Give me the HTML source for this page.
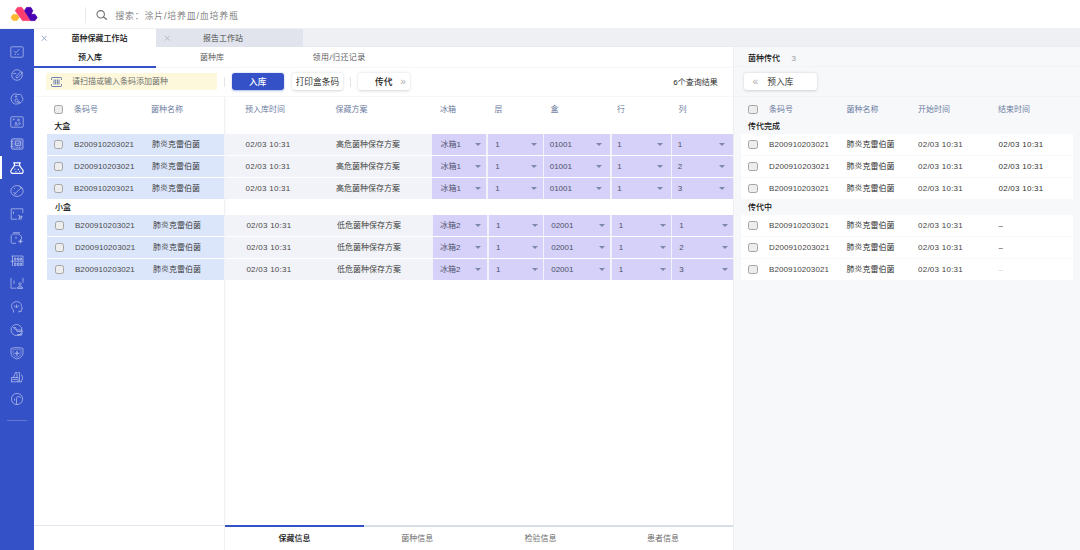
<!DOCTYPE html>
<html lang="zh-CN"><head><meta charset="utf-8"><title>菌种保藏工作站</title>
<style>
*{box-sizing:border-box;margin:0;padding:0}
html,body{width:1080px;height:550px;overflow:hidden;background:#fff}
body{position:relative;font-family:"Liberation Sans","Noto Sans CJK SC",sans-serif;font-size:8px;color:#444;line-height:1;font-weight:350}
.a{position:absolute;white-space:nowrap}
.t{position:absolute;white-space:nowrap;line-height:10px;height:10px}
.cb{position:absolute;width:9.400px;height:8.800px;border:.8px solid #a4a4a4;border-radius:2.400px;background:#ededed;display:block}
.rr .cb,.cbr{width:10.400px}
.hd{color:#5f7399}
.b{font-weight:500;color:#111}
.row{position:absolute;left:46px;width:687px;height:20.8px}
.sel{position:absolute;top:0;height:20.8px;background:#d6d1f8}
.sel span{position:absolute;left:7.200px;top:6.2px;line-height:10px;color:#4a5068}
.sel i{position:absolute;right:5.500px;top:8.800px;width:0;height:0;border-left:3.400px solid transparent;border-right:3.400px solid transparent;border-top:3.400px solid #7d87a6}
.rr{position:absolute;left:741px;width:332px;height:20.8px;background:#fff}
.btn{position:absolute;height:17.5px;border-radius:3px;background:#fff;box-shadow:0 .9px 2.800px rgba(40,50,80,.2);text-align:center;line-height:19px;font-size:8.700px;color:#222}
.ic{position:absolute;left:10.200px;width:14px;height:12px;fill:none;stroke:#fff;stroke-width:.8;opacity:.6;overflow:visible}
</style></head><body>
<div class="a" style="left:0;top:0;width:1080px;height:28.700px;background:#fff;border-bottom:.6px solid #eef0f2"></div>
<svg class="a" style="left:8px;top:5px" width="32" height="18" viewBox="8 5 32 18">
<path d="M12.900 14.400h4.200l2 3.100-2 3.100h-4.200l-2-3.100z" fill="#fdb62f" stroke="#fdb62f" stroke-width=".5" stroke-linejoin="round"/>
<path d="M17.600 7.400h4.300l8.300 13.200h-7.700l-7.200-9.900z" fill="#ff3d6f" stroke="#ff3d6f" stroke-width=".8" stroke-linejoin="round"/>
<path d="M26.600 7.400h4.200l2 3.300-1.700 3.600h3.900l2.100 3.200-2.100 3.100h-4.300l-6.200-9.900z" fill="#4a00b0" stroke="#4a00b0" stroke-width=".8" stroke-linejoin="round"/>
</svg>
<div class="a" style="left:85px;top:6.500px;width:1px;height:16px;background:#e8eaee"></div>
<svg class="a" style="left:96px;top:10.400px" width="11.500" height="10" viewBox="0 0 11.500 10"><circle cx="4.700" cy="4.300" r="3.700" fill="none" stroke="#707070" stroke-width="1.100"/><path d="M7.500 7 L10.600 9.200" stroke="#707070" stroke-width="1.300" stroke-linecap="round"/></svg>
<div class="t" style="left:115.300px;top:9.500px;font-size:9px;color:#777;line-height:12px;height:12px;letter-spacing:.75px">搜索：涂片/培养皿/血培养瓶</div>
<div class="a" style="left:0;top:28.700px;width:34px;height:522px;background:#3451c8"></div>
<div class="a" style="left:0;top:156.300px;width:1.900px;height:22.700px;background:#fff"></div>
<div class="a" style="left:7px;top:420px;width:20px;height:1px;background:rgba(255,255,255,.22)"></div>
<svg class="ic" style="top:46.3px" viewBox="0 0 14 12"><rect x=".8" y=".8" width="12.400" height="10.400" rx=".8"/><path d="M4 4.800l2 2 3.500-3.800M4.500 8.300h1.500M7.500 8.300h1.500"/></svg>
<svg class="ic" style="top:69.2px" viewBox="0 0 14 12"><circle cx="7" cy="6" r="5.300"/><path d="M11.500 1.800L6 7.500l.5 1.500 1.500-.5 5-5.500M3.200 4.500h3"/></svg>
<svg class="ic" style="top:93.2px" viewBox="0 0 14 12"><path d="M3 1.500c2-1.200 4-.3 5 .2 1.500-1.200 4 0 3.800 2 1.500 1.500 1.500 4-.3 5-1 1.800-3 2-4.500 2.300-2 .3-4-.3-5-2.300-1.500-2-1-5.500 1-7.200z"/><circle cx="6.500" cy="7.500" r="1.500"/><circle cx="6" cy="3.500" r=".8"/><circle cx="9" cy="9.300" r=".7"/></svg>
<svg class="ic" style="top:115.6px" viewBox="0 0 14 12"><rect x=".8" y=".8" width="12.400" height="10.400" rx=".8"/><circle cx="3.800" cy="3.500" r=".6"/><circle cx="8.500" cy="4" r="1"/><circle cx="6" cy="7" r=".8"/><circle cx="9.500" cy="7.500" r=".8"/><path d="M4.500 9h4"/></svg>
<svg class="ic" style="top:138.3px" viewBox="0 0 14 12"><rect x="1.500" y=".8" width="11.500" height="10.400" rx="1.200" fill="rgba(255,255,255,.25)"/><rect x="5.500" y="3" width="5" height="4.500" rx=".5"/><path d="M.5 3.500h2.500M.5 6h2.500M.5 8.500h2.500M6.800 5.200l1 1 1.700-1.700M6.500 9.500h1M9 9.500h1"/></svg>
<svg class="ic" style="top:162.0px;opacity:1;stroke-width:1.150" viewBox="0 0 14 12"><path d="M3.200 .8h7.600M4.400 1v2.300C4.400 5 1 6.800.8 9.300.7 10.900 1.800 11.400 3 11.400h8c1.200 0 2.300-.5 2.200-2.100C13 6.800 9.600 5 9.600 3.300V1"/><path d="M4 3.600h6" stroke-width=".7"/><circle cx="5" cy="7" r=".6" fill="#fff" stroke="none"/><circle cx="8.300" cy="7.500" r=".7" fill="#fff" stroke="none"/><circle cx="6" cy="9.500" r=".6" fill="#fff" stroke="none"/><circle cx="9.500" cy="9.500" r=".5" fill="#fff" stroke="none"/></svg>
<svg class="ic" style="top:184.8px" viewBox="0 0 14 12"><ellipse cx="7" cy="6" rx="6.200" ry="5.400"/><path d="M11.500 2.500L4 9.500M9.500 1.500l3 2.500M3.500 7l2.500 2.500M4 3l1 1"/></svg>
<svg class="ic" style="top:207.8px" viewBox="0 0 14 12"><path d="M12.800 5V.8H1.200v10.400H7"/><path d="M3.500 3.500v2.500M8 7l2 1.500M9.500 7.500v3.500M8 11h4M11.500 8v2"/><circle cx="11.300" cy="8.800" r=".8"/></svg>
<svg class="ic" style="top:231.5px" viewBox="0 0 14 12"><path d="M3 .7h7M3.500 2h5.500l2.500 2.500v3M6 11.300H2.200c-.6 0-1-.4-1-1V4c0-1 1-2 2.300-2M6 4.500v2.500"/><path d="M10.500 7l.6 1.700 1.700.6-1.700.6-.6 1.700-.6-1.700-1.700-.6 1.700-.6z" fill="#fff" stroke-width=".3"/></svg>
<svg class="ic" style="top:254.6px" viewBox="0 0 14 12"><path d="M1.500 1h11.500M2.500 1v10M13 1v10M.5 6.200h12.500M4.500 3h1.500v2h-1.500zM7.500 3h1.500v2h-1.500zM10.200 3h1.300v2h-1.300zM4.500 8h1.500v2.500h-1.500zM7.500 8h1.500v2.500h-1.500zM10.200 8h1.300v2.500h-1.300z"/></svg>
<svg class="ic" style="top:277.4px" viewBox="0 0 14 12"><path d="M1 .8v10.400h5.500M13 .8v5M4 3.500v3.500"/><circle cx="10" cy="7" r="1.200"/><path d="M7.500 11.200c0-2.700 5-2.700 5 0zM7.500 11.200h5.500"/></svg>
<svg class="ic" style="top:300.6px" viewBox="0 0 14 12"><path d="M3.500 11.500v-2.500C.5 7 .5 1 6.500.6 11 .8 11.800 4 11.300 5.500l1.200 2-1.200.5v2.500l-2.500-.3v1.300"/><path d="M4.500 4.500c.5 2.500 3.500 2.500 4 0M6.500 3.500v3"/></svg>
<svg class="ic" style="top:324.2px" viewBox="0 0 14 12"><circle cx="6.500" cy="6" r="5.500"/><path d="M3.500 3.500l2 2.500M3.500 3.500h2l1.500 4h4M6.500 6h5.500v4.500h-5M7.500 11.300h4"/></svg>
<svg class="ic" style="top:347.2px" viewBox="0 0 14 12"><path d="M1 1.500C4 .3 10 .3 13 1.500V6c0 3.500-3 5.200-6 6C4 11.200 1 9.500 1 6z"/><path d="M3 2.800C5 2 9 2 11 2.800V6c0 2.300-2 3.600-4 4.300C5 9.600 3 8.300 3 6z" stroke-width=".5"/><path d="M7 3.800v5M4.500 6.300h5" stroke-width="1.100"/></svg>
<svg class="ic" style="top:371.0px" viewBox="0 0 14 12"><path d="M1 10.800h11M1.500 10.800V6.500h6.500v4.300M2.500 8.500h4.500M3.500 6.500l2-5 1.500 0v5M8 1.500h1.500v9M11 3.500c2 1.500 2 5 0 7"/></svg>
<svg class="ic" style="top:392.8px" viewBox="0 0 14 12"><circle cx="7" cy="6" r="5.600"/><path d="M6.500 11.500V5.500c0-2.500 4-2.500 4-.5M4.500 5.500v2"/></svg>
<div class="a" style="left:34px;top:28.700px;width:1046px;height:18px;background:#eef0f3;border-bottom:1px solid #e9ecef"></div>
<div class="a" style="left:34px;top:28.700px;width:122px;height:18px;background:#fff"></div>
<div class="a" style="left:156px;top:28.700px;width:147px;height:18px;background:#e1e4ec"></div>
<svg class="a" style="left:40.600px;top:35px" width="6.600" height="6.600" viewBox="0 0 6 6"><path d="M.8.8l4.400 4.400M5.200.8L.8 5.200" stroke="#7d8fc0" stroke-width=".7"/></svg>
<svg class="a" style="left:164.300px;top:35.200px" width="6.600" height="6.600" viewBox="0 0 6 6"><path d="M.8.8l4.400 4.400M5.200.8L.8 5.200" stroke="#aab0be" stroke-width=".7"/></svg>
<div class="t b" style="left:71.500px;top:34.200px">菌种保藏工作站</div>
<div class="t" style="left:203px;top:34.200px;color:#444">报告工作站</div>
<div class="a" style="left:733px;top:46.700px;width:347px;height:504px;background:#f7f8fa"></div>
<div class="a" style="left:732.500px;top:46.700px;width:1px;height:504px;background:#eceef1"></div>
<div class="a" style="left:34px;top:66.500px;width:699px;height:1px;background:#f6f7f9"></div>
<div class="a" style="left:34px;top:65.600px;width:122px;height:2px;background:#3451c8"></div>
<div class="t b" style="left:78px;top:53.200px">预入库</div>
<div class="t" style="left:199.900px;top:53.200px;color:#555">菌种库</div>
<div class="t" style="left:312.600px;top:53.200px;color:#555;letter-spacing:.4px">领用/归还记录</div>
<div class="a" style="left:46.200px;top:73.300px;width:171.300px;height:16.500px;background:#fdf8dc;border-radius:1px"></div>
<svg class="a" style="left:51px;top:76.600px" width="11" height="10" viewBox="0 0 11 10" fill="none" stroke="#6d80ad" stroke-width="1"><path d="M.5 3V1.200c0-.4.300-.7.700-.7h8.600c.4 0 .7.300.7.700V3M.5 7v1.800c0 .4.300.7.700.7h8.600c.4 0 .7-.3.700-.7V7M3 2.500v5M4.700 2.500v5M6.400 2.500v5M8 2.500v5"/></svg>
<div class="t" style="left:72px;top:77px;color:#666">请扫描或输入条码添加菌种</div>
<div class="a" style="left:224px;top:76.500px;width:1px;height:10.300px;background:#e3e5ea"></div>
<div class="btn" style="left:231.600px;top:72.700px;width:52.200px;background:#3451c8;color:#fff;font-weight:500;box-shadow:0 .5px 2px rgba(52,81,200,.4)">入库</div>
<div class="btn" style="left:291.600px;top:72.700px;width:51.600px">打印盒条码</div>
<div class="a" style="left:350.200px;top:76.500px;width:1px;height:10.300px;background:#e3e5ea"></div>
<div class="btn" style="left:357.600px;top:72.700px;width:52.400px;font-weight:500">传代<span style="font-weight:400;position:absolute;left:42.600px;top:-1px;color:#aaa;font-size:10px">»</span></div>
<div class="t" style="left:673.300px;top:78.200px;color:#222">6个查询结果</div>
<div class="a" style="left:34px;top:96.200px;width:699px;height:1px;background:#f6f7f9"></div>
<div class="a" style="left:224px;top:97px;width:1px;height:453px;background:#eef0f3"></div>
<div class="a" style="left:225px;top:97px;width:3px;height:428px;background:linear-gradient(90deg,rgba(0,0,0,.015),rgba(0,0,0,0))"></div>
<i class="cb" style="left:54.1px;top:104.8px"></i><div class="t hd" style="left:74px;top:105px">条码号</div>
<div class="t hd" style="left:151px;top:105px">菌种名称</div>
<div class="t hd" style="left:245px;top:105px">预入库时间</div>
<div class="t hd" style="left:335.5px;top:105px">保藏方案</div>
<div class="t hd" style="left:440px;top:105px">冰箱</div>
<div class="t hd" style="left:494.5px;top:105px">层</div>
<div class="t hd" style="left:550.5px;top:105px">盒</div>
<div class="t hd" style="left:617px;top:105px">行</div>
<div class="t hd" style="left:678.5px;top:105px">列</div>
<div class="t b" style="left:54.200px;top:121.500px">大盒</div>
<div class="t b" style="left:55px;top:203px">小盒</div>
<div class="row" style="top:134px;left:0;width:733px"><div class="a" style="left:46.5px;top:0;width:177.5px;height:20.800px;background:#dce6fb"></div><div class="a" style="left:224px;top:0;width:509px;height:20.800px;background:#f2f3f8"></div><i class="cb" style="left:54px;top:6px"></i><span class="t" style="left:74px;top:6.200px;letter-spacing:.1px;color:#484848">B200910203021</span><span class="t" style="left:152px;top:6.200px;color:#333">肺炎克雷伯菌</span><span class="t" style="left:245.5px;top:6.200px;letter-spacing:.25px;color:#484848">02/03 10:31</span><span class="t" style="left:336px;top:6.200px;color:#333">高危菌种保存方案</span><div class="sel" style="left:432.0px;width:54px"><span style="left:8.400px">冰箱1</span><i></i></div><div class="sel" style="left:488.0px;width:54.5px"><span>1</span><i></i></div><div class="sel" style="left:544.0px;width:66px"><span style="left:5.700px">01001</span><i style="right:7.900px"></i></div><div class="sel" style="left:611.5px;width:59.5px"><span style="left:5.700px">1</span><i style="right:7.900px"></i></div><div class="sel" style="left:672.0px;width:61px"><span style="left:5.700px">1</span><i style="right:7.900px"></i></div></div>
<div class="row" style="top:155.94px;left:0;width:733px"><div class="a" style="left:46.5px;top:0;width:177.5px;height:20.800px;background:#dce6fb"></div><div class="a" style="left:224px;top:0;width:509px;height:20.800px;background:#f2f3f8"></div><i class="cb" style="left:54px;top:6px"></i><span class="t" style="left:74px;top:6.200px;letter-spacing:.1px;color:#484848">D200910203021</span><span class="t" style="left:152px;top:6.200px;color:#333">肺炎克雷伯菌</span><span class="t" style="left:245.5px;top:6.200px;letter-spacing:.25px;color:#484848">02/03 10:31</span><span class="t" style="left:336px;top:6.200px;color:#333">高危菌种保存方案</span><div class="sel" style="left:432.0px;width:54px"><span style="left:8.400px">冰箱1</span><i></i></div><div class="sel" style="left:488.0px;width:54.5px"><span>1</span><i></i></div><div class="sel" style="left:544.0px;width:66px"><span style="left:5.700px">01001</span><i style="right:7.900px"></i></div><div class="sel" style="left:611.5px;width:59.5px"><span style="left:5.700px">1</span><i style="right:7.900px"></i></div><div class="sel" style="left:672.0px;width:61px"><span style="left:5.700px">2</span><i style="right:7.900px"></i></div></div>
<div class="row" style="top:177.88px;left:0;width:733px"><div class="a" style="left:46.5px;top:0;width:177.5px;height:20.800px;background:#dce6fb"></div><div class="a" style="left:224px;top:0;width:509px;height:20.800px;background:#f2f3f8"></div><i class="cb" style="left:54px;top:6px"></i><span class="t" style="left:74px;top:6.200px;letter-spacing:.1px;color:#484848">B200910203021</span><span class="t" style="left:152px;top:6.200px;color:#333">肺炎克雷伯菌</span><span class="t" style="left:245.5px;top:6.200px;letter-spacing:.25px;color:#484848">02/03 10:31</span><span class="t" style="left:336px;top:6.200px;color:#333">高危菌种保存方案</span><div class="sel" style="left:432.0px;width:54px"><span style="left:8.400px">冰箱1</span><i></i></div><div class="sel" style="left:488.0px;width:54.5px"><span>1</span><i></i></div><div class="sel" style="left:544.0px;width:66px"><span style="left:5.700px">01001</span><i style="right:7.900px"></i></div><div class="sel" style="left:611.5px;width:59.5px"><span style="left:5.700px">1</span><i style="right:7.900px"></i></div><div class="sel" style="left:672.0px;width:61px"><span style="left:5.700px">3</span><i style="right:7.900px"></i></div></div>
<div class="row" style="top:215.1px;left:0;width:733px"><div class="a" style="left:46.9px;top:0;width:177.1px;height:20.800px;background:#dce6fb"></div><div class="a" style="left:224px;top:0;width:509px;height:20.800px;background:#f2f3f8"></div><i class="cb" style="left:54.9px;top:6px"></i><span class="t" style="left:74.9px;top:6.200px;letter-spacing:.1px;color:#484848">B200910203021</span><span class="t" style="left:152.9px;top:6.200px;color:#333">肺炎克雷伯菌</span><span class="t" style="left:246.4px;top:6.200px;letter-spacing:.25px;color:#484848">02/03 10:31</span><span class="t" style="left:336.9px;top:6.200px;color:#333">低危菌种保存方案</span><div class="sel" style="left:432.9px;width:54px"><span>冰箱2</span><i></i></div><div class="sel" style="left:488.9px;width:54.5px"><span>1</span><i></i></div><div class="sel" style="left:544.0px;width:66px"><span>02001</span><i></i></div><div class="sel" style="left:611.5px;width:59.5px"><span>1</span><i></i></div><div class="sel" style="left:672.0px;width:61px"><span>1</span><i></i></div></div>
<div class="row" style="top:237.04px;left:0;width:733px"><div class="a" style="left:46.9px;top:0;width:177.1px;height:20.800px;background:#dce6fb"></div><div class="a" style="left:224px;top:0;width:509px;height:20.800px;background:#f2f3f8"></div><i class="cb" style="left:54.9px;top:6px"></i><span class="t" style="left:74.9px;top:6.200px;letter-spacing:.1px;color:#484848">D200910203021</span><span class="t" style="left:152.9px;top:6.200px;color:#333">肺炎克雷伯菌</span><span class="t" style="left:246.4px;top:6.200px;letter-spacing:.25px;color:#484848">02/03 10:31</span><span class="t" style="left:336.9px;top:6.200px;color:#333">低危菌种保存方案</span><div class="sel" style="left:432.9px;width:54px"><span>冰箱2</span><i></i></div><div class="sel" style="left:488.9px;width:54.5px"><span>1</span><i></i></div><div class="sel" style="left:544.0px;width:66px"><span>02001</span><i></i></div><div class="sel" style="left:611.5px;width:59.5px"><span>1</span><i></i></div><div class="sel" style="left:672.0px;width:61px"><span>2</span><i></i></div></div>
<div class="row" style="top:258.98px;left:0;width:733px"><div class="a" style="left:46.9px;top:0;width:177.1px;height:20.800px;background:#dce6fb"></div><div class="a" style="left:224px;top:0;width:509px;height:20.800px;background:#f2f3f8"></div><i class="cb" style="left:54.9px;top:6px"></i><span class="t" style="left:74.9px;top:6.200px;letter-spacing:.1px;color:#484848">B200910203021</span><span class="t" style="left:152.9px;top:6.200px;color:#333">肺炎克雷伯菌</span><span class="t" style="left:246.4px;top:6.200px;letter-spacing:.25px;color:#484848">02/03 10:31</span><span class="t" style="left:336.9px;top:6.200px;color:#333">低危菌种保存方案</span><div class="sel" style="left:432.9px;width:54px"><span>冰箱2</span><i></i></div><div class="sel" style="left:488.9px;width:54.5px"><span>1</span><i></i></div><div class="sel" style="left:544.0px;width:66px"><span>02001</span><i></i></div><div class="sel" style="left:611.5px;width:59.5px"><span>1</span><i></i></div><div class="sel" style="left:672.0px;width:61px"><span>3</span><i></i></div></div>
<div class="a" style="left:34px;top:525.300px;width:191px;height:1px;background:#e4e8ee"></div>
<div class="a" style="left:224.500px;top:525px;width:508.500px;height:2.300px;background:#d6dee7"></div>
<div class="a" style="left:224.500px;top:524.700px;width:139.500px;height:2.700px;background:#3451c8"></div>
<div class="t b" style="left:278.500px;top:533.500px">保藏信息</div>
<div class="t" style="left:401.300px;top:533.700px;color:#666">菌种信息</div>
<div class="t" style="left:524.400px;top:533.700px;color:#666">检验信息</div>
<div class="t" style="left:647px;top:533.700px;color:#666">患者信息</div>
<div class="t b" style="left:748px;top:53.700px">菌种传代</div>
<div class="t" style="left:791.500px;top:53.700px;color:#999">3</div>
<div class="a" style="left:733px;top:66.300px;width:347px;height:1px;background:#f1f2f5"></div>
<div class="btn" style="left:743.800px;top:72.700px;width:73.200px;text-align:left;padding-left:23.500px"><span style="position:absolute;left:8.700px;top:-1px;color:#aaa;font-size:10px">«</span>预入库</div>
<div class="a" style="left:733px;top:96px;width:347px;height:1px;background:#f1f2f5"></div>
<i class="cb cbr" style="left:748px;top:104.8px"></i><div class="t hd" style="left:769px;top:105px">条码号</div>
<div class="t hd" style="left:846.5px;top:105px">菌种名称</div>
<div class="t hd" style="left:918px;top:105px">开始时间</div>
<div class="t hd" style="left:998px;top:105px">结束时间</div>
<div class="t b" style="left:748px;top:121.800px">传代完成</div>
<div class="t b" style="left:748px;top:202.600px">传代中</div>
<div class="rr" style="top:134px"><i class="cb" style="left:7px;top:6px"></i><span class="t" style="left:28px;top:6.200px;letter-spacing:.1px">B200910203021</span><span class="t" style="left:105.500px;top:6.200px;color:#222">肺炎克雷伯菌</span><span class="t" style="left:177px;top:6.200px;letter-spacing:.25px">02/03 10:31</span><span class="t" style="left:257.500px;top:6.200px;letter-spacing:.25px;color:#333">02/03 10:31</span></div>
<div class="rr" style="top:155.94px"><i class="cb" style="left:7px;top:6px"></i><span class="t" style="left:28px;top:6.200px;letter-spacing:.1px">D200910203021</span><span class="t" style="left:105.500px;top:6.200px;color:#222">肺炎克雷伯菌</span><span class="t" style="left:177px;top:6.200px;letter-spacing:.25px">02/03 10:31</span><span class="t" style="left:257.500px;top:6.200px;letter-spacing:.25px;color:#333">02/03 10:31</span></div>
<div class="rr" style="top:177.88px"><i class="cb" style="left:7px;top:6px"></i><span class="t" style="left:28px;top:6.200px;letter-spacing:.1px">B200910203021</span><span class="t" style="left:105.500px;top:6.200px;color:#222">肺炎克雷伯菌</span><span class="t" style="left:177px;top:6.200px;letter-spacing:.25px">02/03 10:31</span><span class="t" style="left:257.500px;top:6.200px;letter-spacing:.25px;color:#333">02/03 10:31</span></div>
<div class="rr" style="top:215.1px"><i class="cb" style="left:7px;top:6px"></i><span class="t" style="left:28px;top:6.200px;letter-spacing:.1px">B200910203021</span><span class="t" style="left:105.500px;top:6.200px;color:#222">肺炎克雷伯菌</span><span class="t" style="left:177px;top:6.200px;letter-spacing:.25px">02/03 10:31</span><span class="t" style="left:257.500px;top:6.200px;letter-spacing:.25px;color:#333">–</span></div>
<div class="rr" style="top:237.04px"><i class="cb" style="left:7px;top:6px"></i><span class="t" style="left:28px;top:6.200px;letter-spacing:.1px">D200910203021</span><span class="t" style="left:105.500px;top:6.200px;color:#222">肺炎克雷伯菌</span><span class="t" style="left:177px;top:6.200px;letter-spacing:.25px">02/03 10:31</span><span class="t" style="left:257.500px;top:6.200px;letter-spacing:.25px;color:#333">–</span></div>
<div class="rr" style="top:258.98px"><i class="cb" style="left:7px;top:6px"></i><span class="t" style="left:28px;top:6.200px;letter-spacing:.1px">B200910203021</span><span class="t" style="left:105.500px;top:6.200px;color:#222">肺炎克雷伯菌</span><span class="t" style="left:177px;top:6.200px;letter-spacing:.25px">02/03 10:31</span><span class="t" style="left:257.500px;top:6.200px;letter-spacing:.25px;color:#ccc">–</span></div>
</body></html>
